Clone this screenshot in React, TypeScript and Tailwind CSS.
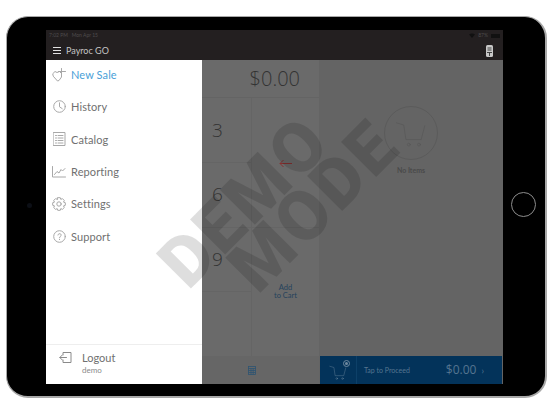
import React from "react";

const s = { fill: "none", stroke: "currentColor", strokeWidth: 1, strokeLinecap: "round" as const, strokeLinejoin: "round" as const };

const NewSale = () => (
  <svg width="14" height="14" viewBox="0 0 14 14" {...s}>
    <path d="M1 5.5 3 3.5 5 4.5 7.5 3.5 9.5 5.5 9.5 9 7 12.5 5.5 13 1.5 8.5Z" />
    <path d="M9.5 0.5V6.5M6.5 3.5H13.5" />
  </svg>
);
const Clock = () => (
  <svg width="13" height="13" viewBox="0 0 13 13" {...s}>
    <circle cx="6.5" cy="6.5" r="5.8" />
    <path d="M6.5 2.8V6.8L9.2 8.6" />
  </svg>
);
const Catalog = () => (
  <svg width="13" height="14" viewBox="0 0 13 14" {...s}>
    <rect x="0.5" y="0.5" width="11.5" height="13" />
    <path d="M2.5 3.5H3.5M5 3.5H10M2.5 6H3.5M5 6H10M2.5 8.5H3.5M5 8.5H10M2.5 11H3.5M5 11H10" />
  </svg>
);
const Chart = () => (
  <svg width="14" height="12" viewBox="0 0 14 12" {...s}>
    <path d="M0.5 0.5V11H13.5" />
    <path d="M2.5 8.5 5 5.5 7 7 9 3.5 10.5 5 13 2.5" />
  </svg>
);
const Gear = () => (
  <svg width="14" height="14" viewBox="0 0 14 14" {...s}>
    <path d="M5.7 0.7H8.3L8.8 2.4 10.4 1.6 12.3 3.5 11.5 5.1 13.3 5.7V8.3L11.5 8.9 12.3 10.5 10.4 12.4 8.8 11.6 8.3 13.3H5.7L5.2 11.6 3.6 12.4 1.7 10.5 2.5 8.9 0.7 8.3V5.7L2.5 5.1 1.7 3.5 3.6 1.6 5.2 2.4Z" />
    <circle cx="7" cy="7" r="2.2" />
  </svg>
);
const Help = () => (
  <svg width="13" height="13" viewBox="0 0 13 13" {...s}>
    <circle cx="6.5" cy="6.5" r="5.8" />
    <path d="M4.9 5C5 3.2 8.2 3.2 8.2 5.1 8.2 6.3 6.5 6.3 6.5 7.8M6.5 9.4V9.6" />
  </svg>
);
const Logout = () => (
  <svg width="13" height="11" viewBox="0 0 13 11" {...s}>
    <path d="M4 3V0.5H12V10.5H4V8" />
    <path d="M7.5 5.5H1M3.3 3 0.8 5.5 3.3 8" />
  </svg>
);
const Cart = ({ size = 44 }: { size?: number }) => (
  <svg width={size} height={size} viewBox="0 0 44 44" {...s}>
    <path d="M2 8 12 11 15 31H36L41 12" />
    <circle cx="19" cy="38" r="2" />
    <circle cx="33" cy="38" r="2" />
  </svg>
);

const items = [
  { label: "New Sale", icon: <NewSale />, active: true },
  { label: "History", icon: <Clock /> },
  { label: "Catalog", icon: <Catalog /> },
  { label: "Reporting", icon: <Chart /> },
  { label: "Settings", icon: <Gear /> },
  { label: "Support", icon: <Help /> },
];

export default function App() {
  return (
    <div className="w-[552px] h-[414px] overflow-hidden bg-white pt-[16px] pl-[6px] font-['Lato',sans-serif]">
      <div className="relative w-[541px] h-[382px] rounded-[22px] bg-black border border-[#a8a8a8] border-b-2 border-r-2 pt-[13px] pl-[39px]">
        <div className="absolute left-[20px] top-[186px] w-[5px] h-[5px] rounded-full bg-[#0c0f16]" />
        <div className="absolute left-[504px] top-[175px] w-[25px] h-[25px] rounded-full border border-[#8d8d8d]" />

        <div className="relative w-[457px] h-[354px] overflow-hidden flex flex-col bg-[#666666]">
          <div className="h-[30px] shrink-0 bg-[#231f20] relative text-[#d8d8d8]">
            <div className="h-[11px] flex items-center justify-between px-[3px] text-[5px] text-[#4f4c4d]">
              <span>7:02 PM&nbsp;&nbsp; Mon Apr 15</span>
              <span className="flex items-center gap-[3px]">
                <svg width="6" height="5" viewBox="0 0 6 5"><path d="M0 1.5C1.6 0 4.4 0 6 1.5L3 5Z" fill="#111" /></svg>
                87%
                <span className="w-[9px] h-[4px] bg-[#111]" />
              </span>
            </div>
            <div className="h-[19px] flex items-center pl-[7px] pr-[10px]">
              <div className="w-[8px] flex flex-col gap-[2px]">
                <div className="h-px bg-[#e2e2e2]" />
                <div className="h-px bg-[#e2e2e2]" />
                <div className="h-px bg-[#e2e2e2]" />
              </div>
              <span className="ml-[5px] text-[9px] leading-none text-[#c4c4c4]">Payroc GO</span>
              <svg className="ml-auto" width="7" height="12" viewBox="0 0 7 12">
                <rect x="0" y="0" width="7" height="12" rx="1.5" fill="#c8c8c8" />
                <path d="M1.5 3H5.5M1.5 5H5.5M1 7.5H6M3.5 7.5V11" stroke="#333" strokeWidth="0.9" fill="none" />
              </svg>
            </div>
          </div>

          <div className="flex-1 flex min-h-0">
            <aside className="w-[156px] shrink-0 bg-white flex flex-col text-[#666666]">
              <div className="flex-1">
                {items.map((it) => (
                  <div key={it.label} className="h-[32.3px] flex items-center pl-[6px] pb-[3px]">
                    <span className="w-[14px] h-[14px] flex items-center justify-center text-[#a8a8a8]">{it.icon}</span>
                    <span className={`ml-[5px] text-[11px] leading-none tracking-[0.1px] ${it.active ? "text-[#4a9fd8]" : "text-[#707070]"}`}>{it.label}</span>
                  </div>
                ))}
              </div>
              <div className="h-[40px] shrink-0 border-t border-[#eeeeee] flex items-center pl-[13px] pb-[3px]">
                <span className="text-[#8a8a8a] mt-[-11px]"><Logout /></span>
                <div className="ml-[10px] flex flex-col">
                  <span className="text-[11px] leading-[14px] text-[#707070]">Logout</span>
                  <span className="text-[8px] leading-[10px] text-[#8a8a8a]">demo</span>
                </div>
              </div>
            </aside>

            <main className="flex-1 flex min-w-0">
              <div className="w-[118px] shrink-0 flex flex-col bg-[#6a6a6a] border-r border-[#646464] text-[#333333]">
                <div className="h-[38px] shrink-0 flex items-center justify-end pr-[19px] text-[20px] leading-none border-b border-[#646464] font-light font-['Open_Sans',sans-serif]">
                  $0.00
                </div>
                <div className="flex-1 flex min-h-0">
                  <div className="w-[50px] shrink-0 flex flex-col border-r border-[#656565] text-[19px] font-light font-['Open_Sans',sans-serif]">
                    {["3", "6", "9", ""].map((n, i) => (
                      <div key={i} className="flex-1 flex items-center pl-[10px] border-b border-[#656565] last:border-b-0">{n}</div>
                    ))}
                  </div>
                  <div className="flex-1 flex flex-col">
                    <div className="flex-1 flex items-center justify-center border-b border-[#656565] text-[#853030] pt-[1px]">
                      <svg width="13" height="9" viewBox="0 0 13 9" fill="none" stroke="currentColor" strokeWidth="1"><path d="M13 4.5H1M4.5 1 1 4.5 4.5 8" /></svg>
                    </div>
                    <div className="flex-1 flex flex-col items-center justify-center text-[7.5px] leading-[8.5px] text-[#25425c]">
                      <span>Add</span>
                      <span>to Cart</span>
                    </div>
                  </div>
                </div>
                <div className="h-[28px] shrink-0 bg-[#666666] flex items-center justify-start pl-[46px] text-[#2d5472]">
                  <svg width="8" height="9" viewBox="0 0 8 9" fill="none" stroke="currentColor" strokeWidth="0.8"><rect x="0.5" y="0.5" width="7" height="8" /><path d="M0.5 2.5H7.5M0.5 4.5H7.5M0.5 6.5H7.5M3 2.5V8.5M5.2 2.5V8.5" /></svg>
                </div>
              </div>

              <div className="flex-1 flex flex-col bg-[#646464] min-w-0">
                <div className="flex-1 flex flex-col items-center pt-[46px] pr-[1px]">
                  <div className="w-[54px] h-[54px] rounded-full border border-[#5b5b5b] flex items-center justify-center text-[#585858]">
                    <Cart size={32} />
                  </div>
                  <span className="mt-[6px] text-[7px] leading-[9px] font-bold text-[#4a4a4a]">No Items</span>
                </div>
                <div className="h-[28px] shrink-0 mr-px bg-[#03335a] flex items-center text-[#557590]">
                  <div className="relative w-[37px] h-full shrink-0 border-r border-[#0d4068] flex items-center justify-center">
                    <span className="mt-[3px] text-[#6f8aa0]"><Cart size={18} /></span>
                    <span className="absolute left-[23px] top-[4px] w-[7px] h-[7px] rounded-full border border-[#6f8aa0] flex items-center justify-center">
                      <span className="w-[3px] h-[3px] rounded-full bg-[#6f8aa0]" />
                    </span>
                  </div>
                  <span className="ml-[7px] text-[7px] leading-none">Tap to Proceed</span>
                  <span className="ml-auto text-[12px] leading-none font-['Open_Sans',sans-serif]">$0.00</span>
                  <span className="ml-[5px] mr-[18px] text-[9px] leading-none">›</span>
                </div>
              </div>
            </main>
          </div>

          <div className="absolute left-[107px] top-[226px] origin-top-left -rotate-45 pointer-events-none flex flex-col items-start text-[70px] leading-[52px] font-black tracking-[3px] text-black/13 font-['Roboto',sans-serif] whitespace-nowrap">
            <span>DEMO</span>
            <span className="ml-[46px]">MODE</span>
          </div>
        </div>
      </div>
    </div>
  );
}
